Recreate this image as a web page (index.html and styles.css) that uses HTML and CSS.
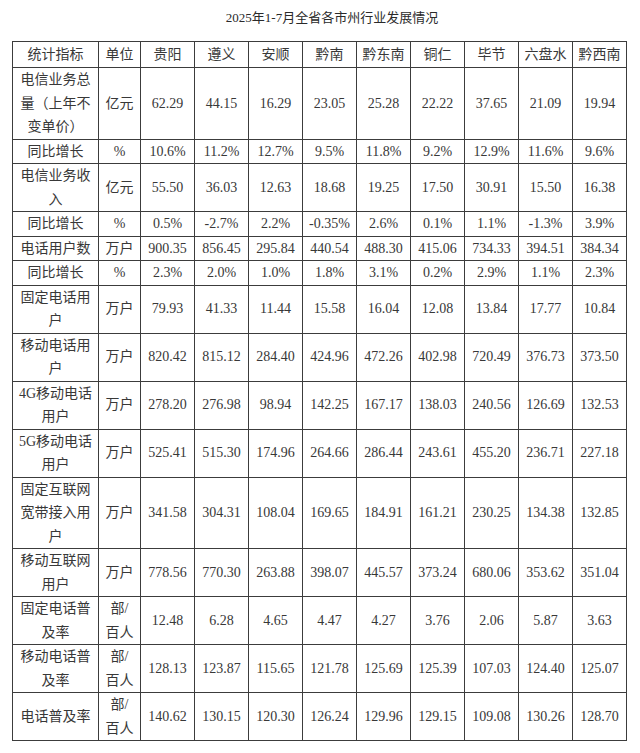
FILE: index.html
```html
<!DOCTYPE html>
<html lang="zh-CN">
<head>
<meta charset="utf-8">
<title>2025年1-7月全省各市州行业发展情况</title>
<link rel="stylesheet" href="styles.css">
</head>
<body>
<div class="page">
  <div class="title">2025年1-7月全省各市州行业发展情况</div>
  <table class="data">
    <colgroup>
      <col class="c-name"><col class="c-unit">
      <col class="c-val"><col class="c-val"><col class="c-val"><col class="c-val"><col class="c-val"><col class="c-val"><col class="c-val"><col class="c-val"><col class="c-val">
    </colgroup>
    <thead>
      <tr class="head"><th>统计指标</th><th>单位</th><th>贵阳</th><th>遵义</th><th>安顺</th><th>黔南</th><th>黔东南</th><th>铜仁</th><th>毕节</th><th>六盘水</th><th>黔西南</th></tr>
    </thead>
    <tbody>
      <tr><td>电信业务总<br>量（上年不<br>变单价）</td><td>亿元</td><td>62.29</td><td>44.15</td><td>16.29</td><td>23.05</td><td>25.28</td><td>22.22</td><td>37.65</td><td>21.09</td><td>19.94</td></tr>
      <tr><td>同比增长</td><td>%</td><td>10.6%</td><td>11.2%</td><td>12.7%</td><td>9.5%</td><td>11.8%</td><td>9.2%</td><td>12.9%</td><td>11.6%</td><td>9.6%</td></tr>
      <tr><td>电信业务收<br>入</td><td>亿元</td><td>55.50</td><td>36.03</td><td>12.63</td><td>18.68</td><td>19.25</td><td>17.50</td><td>30.91</td><td>15.50</td><td>16.38</td></tr>
      <tr><td>同比增长</td><td>%</td><td>0.5%</td><td>-2.7%</td><td>2.2%</td><td>-0.35%</td><td>2.6%</td><td>0.1%</td><td>1.1%</td><td>-1.3%</td><td>3.9%</td></tr>
      <tr><td>电话用户数</td><td>万户</td><td>900.35</td><td>856.45</td><td>295.84</td><td>440.54</td><td>488.30</td><td>415.06</td><td>734.33</td><td>394.51</td><td>384.34</td></tr>
      <tr><td>同比增长</td><td>%</td><td>2.3%</td><td>2.0%</td><td>1.0%</td><td>1.8%</td><td>3.1%</td><td>0.2%</td><td>2.9%</td><td>1.1%</td><td>2.3%</td></tr>
      <tr><td>固定电话用<br>户</td><td>万户</td><td>79.93</td><td>41.33</td><td>11.44</td><td>15.58</td><td>16.04</td><td>12.08</td><td>13.84</td><td>17.77</td><td>10.84</td></tr>
      <tr><td>移动电话用<br>户</td><td>万户</td><td>820.42</td><td>815.12</td><td>284.40</td><td>424.96</td><td>472.26</td><td>402.98</td><td>720.49</td><td>376.73</td><td>373.50</td></tr>
      <tr><td>4G移动电话<br>用户</td><td>万户</td><td>278.20</td><td>276.98</td><td>98.94</td><td>142.25</td><td>167.17</td><td>138.03</td><td>240.56</td><td>126.69</td><td>132.53</td></tr>
      <tr><td>5G移动电话<br>用户</td><td>万户</td><td>525.41</td><td>515.30</td><td>174.96</td><td>264.66</td><td>286.44</td><td>243.61</td><td>455.20</td><td>236.71</td><td>227.18</td></tr>
      <tr><td>固定互联网<br>宽带接入用<br>户</td><td>万户</td><td>341.58</td><td>304.31</td><td>108.04</td><td>169.65</td><td>184.91</td><td>161.21</td><td>230.25</td><td>134.38</td><td>132.85</td></tr>
      <tr><td>移动互联网<br>用户</td><td>万户</td><td>778.56</td><td>770.30</td><td>263.88</td><td>398.07</td><td>445.57</td><td>373.24</td><td>680.06</td><td>353.62</td><td>351.04</td></tr>
      <tr><td>固定电话普<br>及率</td><td>部/<br>百人</td><td>12.48</td><td>6.28</td><td>4.65</td><td>4.47</td><td>4.27</td><td>3.76</td><td>2.06</td><td>5.87</td><td>3.63</td></tr>
      <tr><td>移动电话普<br>及率</td><td>部/<br>百人</td><td>128.13</td><td>123.87</td><td>115.65</td><td>121.78</td><td>125.69</td><td>125.39</td><td>107.03</td><td>124.40</td><td>125.07</td></tr>
      <tr><td>电话普及率</td><td>部/<br>百人</td><td>140.62</td><td>130.15</td><td>120.30</td><td>126.24</td><td>129.96</td><td>129.15</td><td>109.08</td><td>130.26</td><td>128.70</td></tr>
    </tbody>
  </table>
</div>
</body>
</html>
```

FILE: styles.css
```css
html, body {
  margin: 0;
  padding: 0;
  background: #ffffff;
}

body {
  font-family: "Liberation Serif", "Noto Sans CJK SC", serif;
  color: #383838;
}

.page {
  padding-left: 12px;
  width: 616px;
}

.title {
  height: 41px;
  line-height: 36px;
  font-size: 13px;
  text-align: center;
  padding-left: 24px;
  box-sizing: border-box;
  color: #2a2a2a;
}

.data {
  border-collapse: collapse;
  table-layout: fixed;
  width: 615px;
  font-size: 14px;
}

.c-name { width: 86px; }
.c-unit { width: 42px; }
.c-val { width: 54px; }

.data th,
.data td {
  border: 1px solid #3c3c3c;
  padding: 0 5px;
  line-height: 23.5px;
  text-align: center;
  vertical-align: middle;
  font-weight: normal;
  white-space: nowrap;
  overflow: hidden;
}

.data .head th {
  height: 26px;
  padding-top: 1px;
  box-sizing: border-box;
}
```
